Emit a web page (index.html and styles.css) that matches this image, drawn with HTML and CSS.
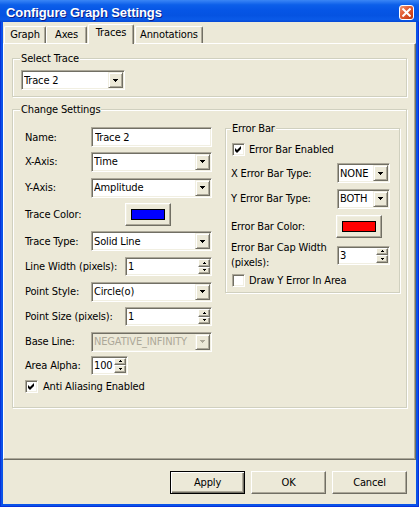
FILE: index.html
```html
<!DOCTYPE html>
<html>
<head>
<meta charset="utf-8">
<title>Configure Graph Settings</title>
<link rel="stylesheet" href="styles.css">
</head>
<body>
<div class="window">
  <div class="titlebar">
    <span class="title">Configure Graph Settings</span>
    <span class="close"><svg width="9" height="9" viewBox="0 0 9 9"><path d="M1.2 1.2L7.8 7.8M7.8 1.2L1.2 7.8" stroke="#fff" stroke-width="2" stroke-linecap="square"/></svg></span>
  </div>
  <div class="client">
    <div class="tabs">
      <div class="tab t-graph">Graph</div>
      <div class="tab t-axes">Axes</div>
      <div class="tab tab-active t-traces">Traces</div>
      <div class="tab t-ann">Annotations</div>
    </div>
    <div class="panel">
      <div class="group g-select">
        <span class="group-title">Select Trace</span>
        <div class="field combo c-trace"><span class="val">Trace 2</span><span class="drop"><svg width="5" height="3" viewBox="0 0 5 3"><path d="M0 0h5v1H0zM1 1h3v1H1zM2 2h1v1H2z"/></svg></span></div>
      </div>
      <div class="group g-change">
        <span class="group-title">Change Settings</span>
        <div class="change-body">
          <div class="form">
            <span class="lbl">Name:</span>
            <div class="field text wide"><span class="val">Trace 2</span></div>

            <span class="lbl">X-Axis:</span>
            <div class="field combo wide"><span class="val">Time</span><span class="drop"><svg width="5" height="3" viewBox="0 0 5 3"><path d="M0 0h5v1H0zM1 1h3v1H1zM2 2h1v1H2z"/></svg></span></div>

            <span class="lbl">Y-Axis:</span>
            <div class="field combo wide"><span class="val">Amplitude</span><span class="drop"><svg width="5" height="3" viewBox="0 0 5 3"><path d="M0 0h5v1H0zM1 1h3v1H1zM2 2h1v1H2z"/></svg></span></div>

            <span class="lbl lbl-long">Trace Color:</span>
            <div class="colorbtn c-left"><span class="swatch sw-blue"></span></div>

            <span class="lbl">Trace Type:</span>
            <div class="field combo wide"><span class="val">Solid Line</span><span class="drop"><svg width="5" height="3" viewBox="0 0 5 3"><path d="M0 0h5v1H0zM1 1h3v1H1zM2 2h1v1H2z"/></svg></span></div>

            <span class="lbl lbl-long">Line Width (pixels):</span>
            <div class="field spin s-narrow"><span class="val">1</span><span class="spin-btns"><span class="sb"><svg width="3" height="2" viewBox="0 0 3 2"><path d="M1 0h1v1H1zM0 1h3v1H0z"/></svg></span><span class="sb"><svg width="3" height="2" viewBox="0 0 3 2"><path d="M0 0h3v1H0zM1 1h1v1H1z"/></svg></span></span></div>

            <span class="lbl">Point Style:</span>
            <div class="field combo wide"><span class="val">Circle(o)</span><span class="drop"><svg width="5" height="3" viewBox="0 0 5 3"><path d="M0 0h5v1H0zM1 1h3v1H1zM2 2h1v1H2z"/></svg></span></div>

            <span class="lbl lbl-long">Point Size (pixels):</span>
            <div class="field spin s-narrow"><span class="val">1</span><span class="spin-btns"><span class="sb"><svg width="3" height="2" viewBox="0 0 3 2"><path d="M1 0h1v1H1zM0 1h3v1H0z"/></svg></span><span class="sb"><svg width="3" height="2" viewBox="0 0 3 2"><path d="M0 0h3v1H0zM1 1h1v1H1z"/></svg></span></span></div>

            <span class="lbl">Base Line:</span>
            <div class="field combo wide disabled"><span class="val">NEGATIVE_INFINITY</span><span class="drop"><svg width="5" height="3" viewBox="0 0 5 3"><path d="M0 0h5v1H0zM1 1h3v1H1zM2 2h1v1H2z"/></svg></span></div>

            <span class="lbl">Area Alpha:</span>
            <div class="field spin s-alpha"><span class="val">100</span><span class="spin-btns"><span class="sb"><svg width="3" height="2" viewBox="0 0 3 2"><path d="M1 0h1v1H1zM0 1h3v1H0z"/></svg></span><span class="sb"><svg width="3" height="2" viewBox="0 0 3 2"><path d="M0 0h3v1H0zM1 1h1v1H1z"/></svg></span></span></div>

            <label class="check full"><span class="box"><svg width="7" height="7" viewBox="0 0 7 7"><path d="M6 0v3L2 7 0 5V2l2 2z"/></svg></span><span>Anti Aliasing Enabled</span></label>
          </div>

          <div class="group g-error">
            <span class="group-title">Error Bar</span>
            <div class="eform">
              <label class="check efull"><span class="box"><svg width="7" height="7" viewBox="0 0 7 7"><path d="M6 0v3L2 7 0 5V2l2 2z"/></svg></span><span>Error Bar Enabled</span></label>

              <span class="lbl">X Error Bar Type:</span>
              <div class="field combo"><span class="val">NONE</span><span class="drop"><svg width="5" height="3" viewBox="0 0 5 3"><path d="M0 0h5v1H0zM1 1h3v1H1zM2 2h1v1H2z"/></svg></span></div>

              <span class="lbl">Y Error Bar Type:</span>
              <div class="field combo"><span class="val">BOTH</span><span class="drop"><svg width="5" height="3" viewBox="0 0 5 3"><path d="M0 0h5v1H0zM1 1h3v1H1zM2 2h1v1H2z"/></svg></span></div>

              <span class="lbl">Error Bar Color:</span>
              <div class="colorbtn c-right"><span class="swatch sw-red"></span></div>

              <span class="lbl two">Error Bar Cap Width<br>(pixels):</span>
              <div class="field spin"><span class="val">3</span><span class="spin-btns"><span class="sb"><svg width="3" height="2" viewBox="0 0 3 2"><path d="M1 0h1v1H1zM0 1h3v1H0z"/></svg></span><span class="sb"><svg width="3" height="2" viewBox="0 0 3 2"><path d="M0 0h3v1H0zM1 1h1v1H1z"/></svg></span></span></div>

              <label class="check efull"><span class="box"></span><span>Draw Y Error In Area</span></label>
            </div>
          </div>
        </div>
      </div>
    </div>
    <div class="buttons">
      <div class="btn btn-default">Apply</div>
      <div class="btn">OK</div>
      <div class="btn">Cancel</div>
    </div>
  </div>
</div>
</body>
</html>
```

FILE: styles.css
```css
* { box-sizing: border-box; }
html, body { margin: 0; padding: 0; }
body {
  width: 419px;
  height: 507px;
  overflow: hidden;
  background: #0c4fe0;
  font-family: "DejaVu Sans Condensed", "Liberation Sans", sans-serif;
  font-size: 11px;
  letter-spacing: -0.15px;
  color: #000;
}

.window {
  width: 419px;
  height: 507px;
  display: flex;
  flex-direction: column;
  background: #0a52e8;
  box-shadow: inset 1px 0 0 #0831d9, inset -1px 0 0 #0831d9, inset 0 -1px 0 #0831d9;
}

.titlebar {
  flex: none;
  height: 22px;
  display: flex;
  align-items: center;
  padding: 0 5px 0 6px;
  background: linear-gradient(180deg, #3a86f5 0%, #2a78f2 8%, #0c5fe9 22%, #0656e6 45%, #0553e2 70%, #0a5ae8 88%, #0648d4 100%);
}
.title {
  flex: 1;
  font-family: "Liberation Sans", sans-serif;
  font-weight: bold;
  font-size: 13px;
  color: #fff;
  text-shadow: 1px 1px 0 #0a1e8a;
  margin-top: 3px;
  letter-spacing: -0.1px;
}
.close {
  width: 15px;
  height: 15px;
  margin-top: 3px;
  border: 1px solid #fff;
  border-radius: 3px;
  background: linear-gradient(135deg, #f09a78 0%, #e4643c 35%, #d0451c 75%, #b8380f 100%);
  display: flex;
  align-items: center;
  justify-content: center;
}

.client {
  flex: 1;
  margin: 0 3px 3px 3px;
  background: #ece9d8;
  display: flex;
  flex-direction: column;
}

/* Tabs */
.tabs {
  flex: none;
  height: 21px;
  display: flex;
  align-items: flex-start;
  padding-left: 1px;
}
.tab {
  height: 17px;
  margin-top: 4px;
  border-top: 1px solid #fff;
  border-left: 1px solid #fff;
  border-right: 1px solid #716f64;
  box-shadow: inset -1px 0 0 #aca899;
  border-radius: 2px 2px 0 0;
  text-align: center;
  line-height: 15px;
  background: #ece9d8;
}
.t-graph { width: 42px; }
.t-axes { width: 41px; margin-left: 0; }
.t-traces { width: 46px; margin-left: 1px; }
.t-ann { width: 68px; margin-left: 1px; }
.tab-active {
  position: relative;
  z-index: 1;
  height: 20px;
  margin-top: 2px;
  line-height: 15px;
}

/* Panel */
.panel {
  flex: none;
  height: 417px;
  border-top: 1px solid #fff;
  border-left: 1px solid #fff;
  border-right: 1px solid #716f64;
  border-bottom: 1px solid #716f64;
  box-shadow: inset -1px -1px 0 #aca899;
  padding: 14px 8px 0 8px;
  display: flex;
  flex-direction: column;
}

.group {
  border: 1px solid #d0d0bf;
  box-shadow: inset 1px 1px 0 #fff, 1px 1px 0 #fff;
  display: flex;
  flex-direction: column;
  align-items: flex-start;
}
.group-title {
  margin-top: -7px;
  padding: 0 1px;
  height: 13px;
  line-height: 13px;
  background: #ece9d8;
  white-space: nowrap;
}

.g-select { padding: 0 0 6px 8px; }
.g-select .group-title { margin-left: -1px; }
.c-trace { width: 104px; margin-top: 5px; }

.g-change {
  margin-top: 12px;
  padding: 0 6px 11px 12px;
}
.g-change > .group-title { margin-left: -5px; }
.change-body {
  margin-top: 9px;
  display: flex;
  align-items: flex-start;
  gap: 13px;
}

.form {
  width: 187px;
  display: grid;
  grid-template-columns: 66px 34px 87px;
  grid-template-rows: 24px 25px 27px 27px 26px 25px 25px 25px 25px 22px 20px;
  align-items: center;
}
.lbl { grid-column: 1; white-space: nowrap; }
.lbl-long { grid-column: 1 / 3; }
.wide { grid-column: 2 / 4; }
.s-narrow { grid-column: 3; }
.c-left { grid-column: 3; justify-self: start; }
.s-alpha { grid-column: 2 / 4; width: 37px; justify-self: start; }
.full { grid-column: 1 / 4; }

/* fields */
.field {
  height: 20px;
  background: #fff;
  border: 1px solid;
  border-color: #aca899 #fff #fff #aca899;
  box-shadow: inset 1px 1px 0 #716f64, inset -1px -1px 0 #f1efe2;
  display: flex;
  align-items: center;
  padding: 1px 1px 1px 2px;
  white-space: nowrap;
  overflow: hidden;
}
.field .val { flex: 1; overflow: hidden; }
.text { padding-left: 3px; }
.drop {
  flex: none;
  width: 15px;
  height: 16px;
  background: #ece9d8;
  border: 1px solid;
  border-color: #f1efe2 #716f64 #716f64 #f1efe2;
  box-shadow: inset 1px 1px 0 #fff, inset -1px -1px 0 #aca899;
  display: flex;
  align-items: center;
  justify-content: center;
}
.drop svg { fill: #000; }
.disabled { background: #ece9d8; }
.disabled .val { color: #aca899; }
.disabled .drop svg { fill: #aca899; }

.spin { height: 19px; }
.spin-btns {
  flex: none;
  width: 12px;
  height: 15px;
  display: flex;
  flex-direction: column;
}
.sb {
  flex: 1;
  background: #ece9d8;
  border: 1px solid;
  border-color: #fff #716f64 #716f64 #fff;
  box-shadow: inset -1px -1px 0 #aca899;
  display: flex;
  align-items: center;
  justify-content: center;
}
.sb svg { fill: #000; }

.colorbtn {
  width: 46px;
  height: 23px;
  background: #ece9d8;
  border: 1px solid;
  border-color: #fff #716f64 #716f64 #fff;
  box-shadow: inset -1px -1px 0 #aca899, inset 1px 1px 0 #f1efe2;
  display: flex;
  align-items: center;
  justify-content: center;
}
.swatch {
  width: 34px;
  height: 11px;
  border: 1px solid #000;
}
.sw-blue { background: #0000ff; }
.sw-red { background: #ff0000; }

.check {
  display: flex;
  align-items: center;
  gap: 5px;
  white-space: nowrap;
}
.box {
  width: 13px;
  height: 13px;
  background: #fff;
  border: 1px solid;
  border-color: #aca899 #fff #fff #aca899;
  box-shadow: inset 1px 1px 0 #716f64, inset -1px -1px 0 #f1efe2;
  display: flex;
  align-items: center;
  justify-content: center;
}
.box svg { fill: #000; }

/* Error bar group */
.g-error {
  width: 175px;
  margin-top: 3px;
  padding: 0 0 1px 5px;
}
.g-error .group-title { margin-left: 0; }
.eform {
  margin-top: 2px;
  display: grid;
  grid-template-columns: 106px 53px;
  grid-template-rows: 24px 24px 27px 28px 30px 21px;
  align-items: center;
}
.efull { grid-column: 1 / 3; margin-left: 1px; gap: 4px; }
.eform .combo, .eform .spin { grid-column: 2; }
.c-right { grid-column: 2; justify-self: start; margin-left: -1px; }
.two { line-height: 15px; }

/* bottom buttons */
.buttons {
  flex: 1;
  display: flex;
  justify-content: flex-end;
  align-items: flex-start;
  gap: 6px;
  padding: 11px 9px 0 0;
}
.btn {
  width: 75px;
  height: 23px;
  background: #ece9d8;
  border: 1px solid;
  border-color: #fff #716f64 #716f64 #fff;
  box-shadow: inset -1px -1px 0 #aca899;
  display: flex;
  align-items: center;
  justify-content: center;
}
.btn-default {
  border-color: #000;
  box-shadow: inset 1px 1px 0 #fff, inset -1px -1px 0 #716f64, inset -2px -2px 0 #aca899;
}
```
